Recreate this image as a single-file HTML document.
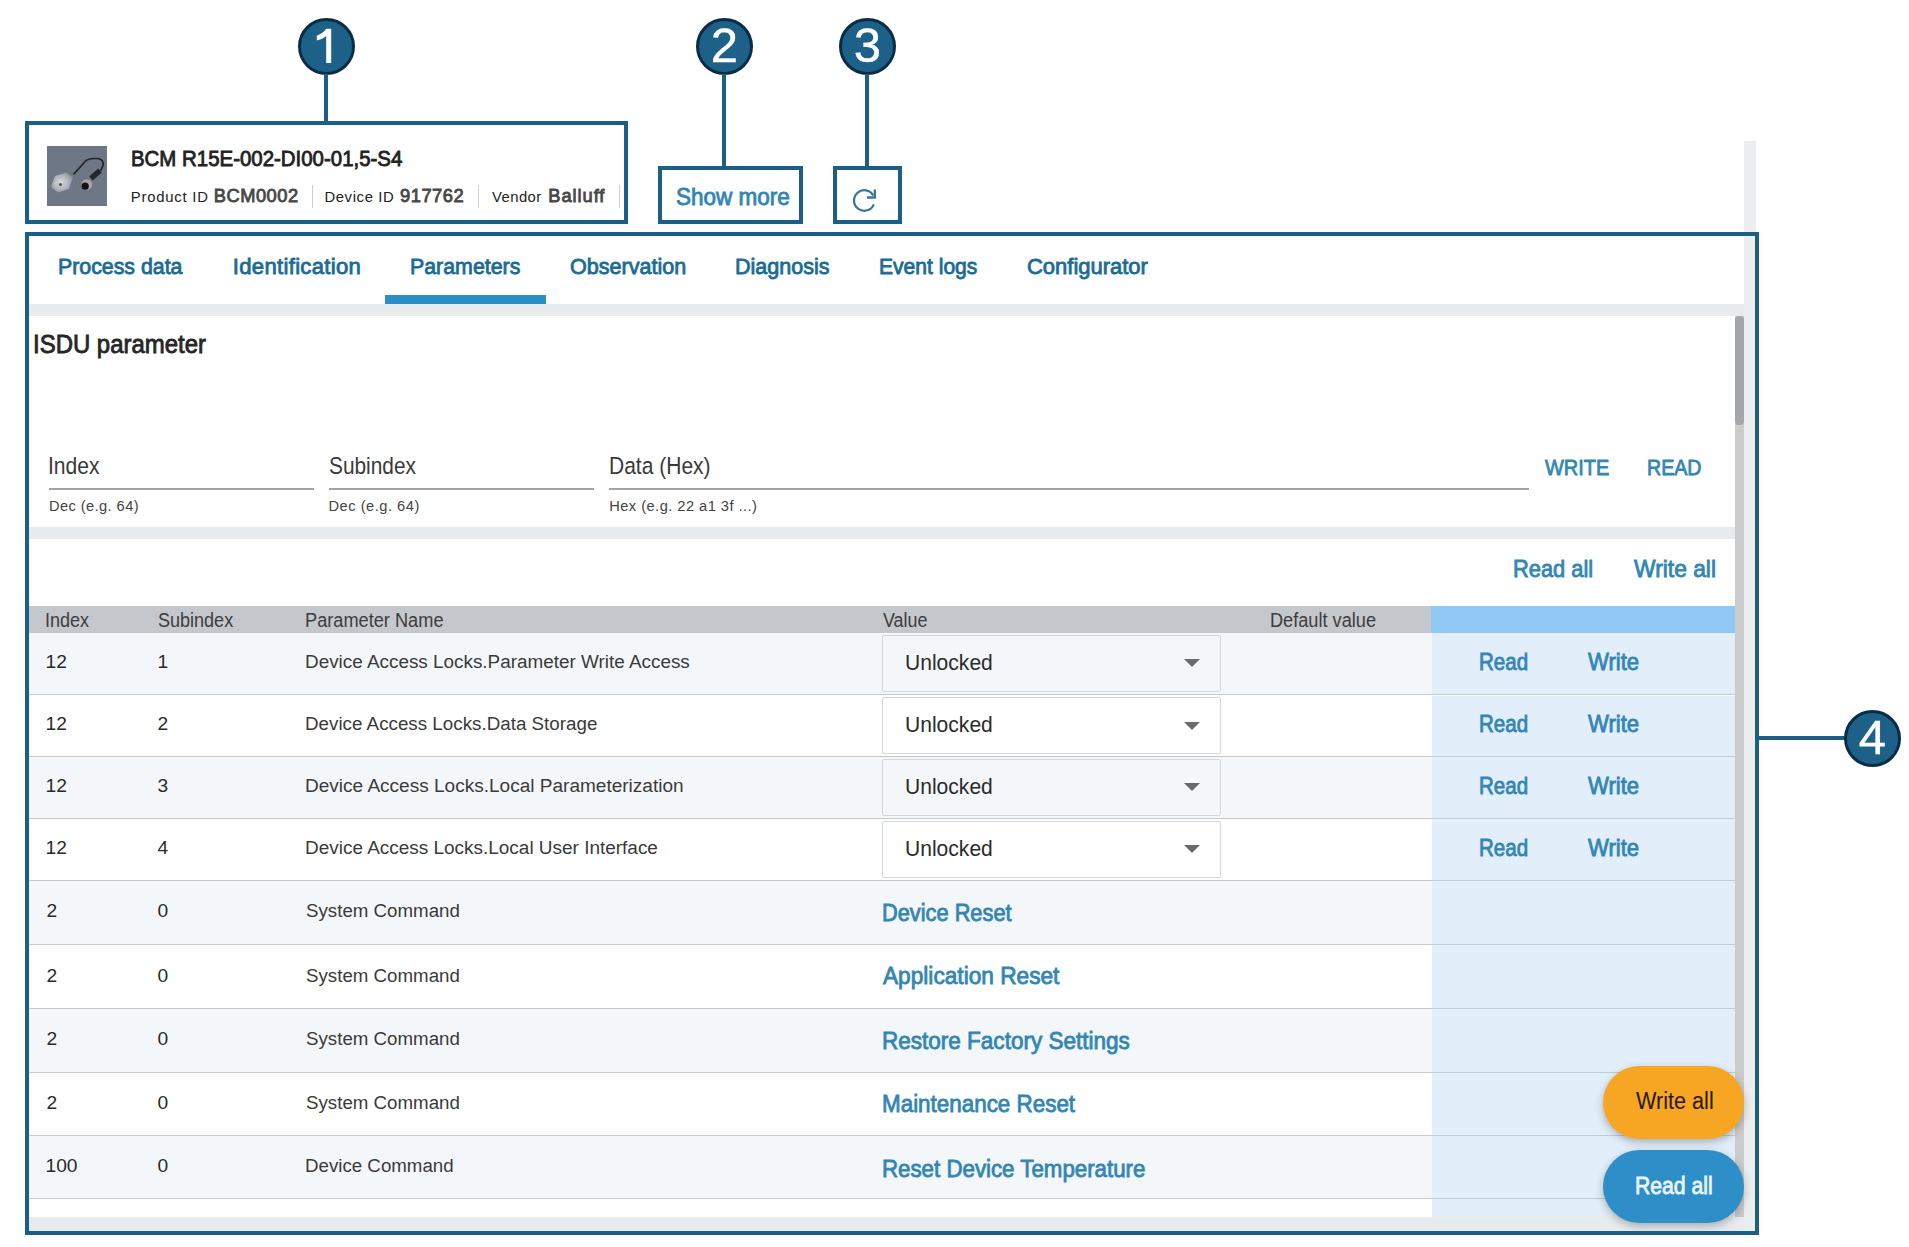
<!DOCTYPE html>
<html><head><meta charset="utf-8">
<style>
*{margin:0;padding:0;box-sizing:border-box}
html,body{width:1909px;height:1247px;overflow:hidden;background:#fff;font-family:"Liberation Sans",sans-serif}
.a{position:absolute}
.t{position:absolute;line-height:1;white-space:nowrap}
.cb{position:absolute;border:4px solid #1b5e86}
.ln{position:absolute;background:#1b5e86}
.circ{position:absolute;width:57px;height:57px;border-radius:50%;background:#1d6189;border:3.5px solid #0a2d46}
.circ span{position:absolute;left:0;right:0;text-align:center;color:#fff;font-size:49px;line-height:1;-webkit-text-stroke:0.4px #fff}
.sel{position:absolute;left:882px;width:339px;height:57px;border:1px solid #d4d7db;border-radius:2px}
.arr{position:absolute;left:1184px;width:0;height:0;border-left:8px solid transparent;border-right:8px solid transparent;border-top:8px solid #6a6a6a}
.sep{position:absolute;left:29px;width:1403px;height:1px;background:#c7cacd}
.sepb{position:absolute;left:1432px;width:303px;height:1px;background:#bfcdd8}
</style></head><body>

<div class="a" style="left:1744px;top:141px;width:12px;height:95px;background:#ebedef"></div>
<div class="a" style="left:29px;top:236px;width:1715px;height:68px;background:#fff"></div>
<div class="a" style="left:1744px;top:236px;width:11px;height:995px;background:#ebedef"></div>
<div class="a" style="left:29px;top:304px;width:1715px;height:12px;background:#e8ebee"></div>
<div class="a" style="left:29px;top:527px;width:1706px;height:12px;background:#e8ebee"></div>
<div class="a" style="left:29px;top:1217px;width:1715px;height:14px;background:#e8ebee"></div>
<div class="a" style="left:385px;top:295px;width:161px;height:9px;background:#2b8fc6"></div>
<div class="a" style="left:49px;top:488px;width:265px;height:2px;background:#a3a3a3"></div>
<div class="a" style="left:329px;top:488px;width:265px;height:2px;background:#a3a3a3"></div>
<div class="a" style="left:609px;top:488px;width:920px;height:2px;background:#a3a3a3"></div>
<div class="a" style="left:29px;top:606px;width:1402px;height:27px;background:#c4c7cc"></div>
<div class="a" style="left:1431px;top:606px;width:304px;height:27px;background:#90c8f4"></div>
<div class="a" style="left:29px;top:633px;width:1403px;height:61.5px;background:#f4f7fa"></div>
<div class="a" style="left:1432px;top:633px;width:303px;height:61.5px;background:#e2effa"></div>
<div class="sep" style="top:694px"></div><div class="sepb" style="top:694px"></div>
<div class="sel" style="top:634.5px;background:#f4f7fa"></div>
<div class="arr" style="top:659.0px"></div>
<div class="a" style="left:29px;top:695.5px;width:1403px;height:60.8px;background:#ffffff"></div>
<div class="a" style="left:1432px;top:695.5px;width:303px;height:60.8px;background:#e2effa"></div>
<div class="sep" style="top:756px"></div><div class="sepb" style="top:756px"></div>
<div class="sel" style="top:697.0px;background:#ffffff"></div>
<div class="arr" style="top:721.5px"></div>
<div class="a" style="left:29px;top:757.3px;width:1403px;height:61.0px;background:#f4f7fa"></div>
<div class="a" style="left:1432px;top:757.3px;width:303px;height:61.0px;background:#e2effa"></div>
<div class="sep" style="top:818px"></div><div class="sepb" style="top:818px"></div>
<div class="sel" style="top:758.8px;background:#f4f7fa"></div>
<div class="arr" style="top:783.3px"></div>
<div class="a" style="left:29px;top:819.3px;width:1403px;height:60.7px;background:#ffffff"></div>
<div class="a" style="left:1432px;top:819.3px;width:303px;height:60.7px;background:#e2effa"></div>
<div class="sep" style="top:880px"></div><div class="sepb" style="top:880px"></div>
<div class="sel" style="top:820.8px;background:#ffffff"></div>
<div class="arr" style="top:845.3px"></div>
<div class="a" style="left:29px;top:881px;width:1403px;height:63.4px;background:#f4f7fa"></div>
<div class="a" style="left:1432px;top:881px;width:303px;height:63.4px;background:#e2effa"></div>
<div class="sep" style="top:944px"></div><div class="sepb" style="top:944px"></div>
<div class="a" style="left:29px;top:945.4px;width:1403px;height:62.4px;background:#ffffff"></div>
<div class="a" style="left:1432px;top:945.4px;width:303px;height:62.4px;background:#e2effa"></div>
<div class="sep" style="top:1008px"></div><div class="sepb" style="top:1008px"></div>
<div class="a" style="left:29px;top:1008.8px;width:1403px;height:62.9px;background:#f4f7fa"></div>
<div class="a" style="left:1432px;top:1008.8px;width:303px;height:62.9px;background:#e2effa"></div>
<div class="sep" style="top:1072px"></div><div class="sepb" style="top:1072px"></div>
<div class="a" style="left:29px;top:1072.7px;width:1403px;height:62.1px;background:#ffffff"></div>
<div class="a" style="left:1432px;top:1072.7px;width:303px;height:62.1px;background:#e2effa"></div>
<div class="sep" style="top:1135px"></div><div class="sepb" style="top:1135px"></div>
<div class="a" style="left:29px;top:1135.8px;width:1403px;height:62.4px;background:#f4f7fa"></div>
<div class="a" style="left:1432px;top:1135.8px;width:303px;height:62.4px;background:#e2effa"></div>
<div class="sep" style="top:1198px"></div><div class="sepb" style="top:1198px"></div>
<div class="a" style="left:29px;top:1199.2px;width:1403px;height:17.799999999999955px;background:#fff"></div>
<div class="a" style="left:1432px;top:1199.2px;width:303px;height:17.799999999999955px;background:#e2effa"></div>
<div class="a" style="left:1735px;top:316px;width:9px;height:901px;background:#cbcbcb"></div>
<div class="a" style="left:1735px;top:316px;width:9px;height:109px;background:#a3a5a9;border-radius:4px"></div>
<svg class="a" style="left:47px;top:146px" width="60" height="60" viewBox="0 0 60 60">
<defs><radialGradient id="sv" cx="0.45" cy="0.5" r="0.6"><stop offset="0" stop-color="#d9dadb"/><stop offset="0.55" stop-color="#b4b7ba"/><stop offset="1" stop-color="#858b92"/></radialGradient></defs>
<rect width="60" height="60" fill="#6d7785"/>
<path d="M26.5 28.5 L38.5 15 Q40.5 13 47 12.5 L51 12.5 Q57 13.5 56 19.5 L53.5 25" fill="none" stroke="#1e2226" stroke-width="1.7"/>
<path d="M53 24.5 L44 32.5" stroke="#25282b" stroke-width="5.5"/>
<path d="M4 41 L8 30 L19 26.5 L26 31 L22 43 L11 46.5 Z" fill="url(#sv)"/>
<circle cx="13.5" cy="38.5" r="1.6" fill="#555"/>
<circle cx="39.8" cy="38.6" r="5.3" fill="#a3a7ab"/>
<circle cx="38.2" cy="40.2" r="3.6" fill="#121212"/>
</svg>
<div class="a" style="left:312px;top:185px;width:1px;height:23px;background:#cfcfcf"></div>
<div class="a" style="left:478px;top:185px;width:1px;height:23px;background:#cfcfcf"></div>
<div class="a" style="left:619px;top:185px;width:1px;height:23px;background:#cfcfcf"></div>
<div class="a" style="left:1603px;top:1066px;width:141px;height:73px;border-radius:37px;background:#f6a623;box-shadow:0 3px 8px rgba(0,0,0,.28)"></div>
<div class="a" style="left:1603px;top:1150px;width:141px;height:73px;border-radius:37px;background:#2e8ec7;box-shadow:0 3px 8px rgba(0,0,0,.28)"></div>
<div class="t" style="left:131.28px;top:147.94px;font-size:21.80px;font-weight:normal;-webkit-text-stroke:0.85px #222;transform:scaleX(0.9370);transform-origin:0 0;color:#222">BCM R15E-002-DI00-01,5-S4</div>
<div class="t" style="left:130.80px;top:190.05px;font-size:14.83px;font-weight:normal;letter-spacing:0.791px;color:#222">Product ID</div>
<div class="t" style="left:213.72px;top:187.10px;font-size:18.31px;font-weight:normal;-webkit-text-stroke:0.85px #484848;letter-spacing:0.512px;color:#484848">BCM0002</div>
<div class="t" style="left:324.40px;top:190.05px;font-size:14.83px;font-weight:normal;letter-spacing:0.637px;color:#222">Device ID</div>
<div class="t" style="left:400.12px;top:187.10px;font-size:18.31px;font-weight:normal;-webkit-text-stroke:0.85px #484848;letter-spacing:0.496px;color:#484848">917762</div>
<div class="t" style="left:491.90px;top:190.05px;font-size:14.83px;font-weight:normal;letter-spacing:0.477px;color:#222">Vendor</div>
<div class="t" style="left:548.32px;top:187.10px;font-size:18.31px;font-weight:normal;-webkit-text-stroke:0.85px #484848;letter-spacing:0.937px;color:#484848">Balluff</div>
<div class="t" style="left:676.05px;top:185.61px;font-size:23.26px;font-weight:normal;-webkit-text-stroke:0.85px #3386b4;transform:scaleX(0.9679);transform-origin:0 0;color:#3386b4">Show more</div>
<div class="t" style="left:58.45px;top:255.80px;font-size:22.09px;font-weight:normal;-webkit-text-stroke:0.85px #1b6c96;transform:scaleX(0.9656);transform-origin:0 0;color:#1b6c96">Process data</div>
<div class="t" style="left:232.82px;top:255.80px;font-size:22.09px;font-weight:normal;-webkit-text-stroke:0.85px #1b6c96;letter-spacing:0.314px;color:#1b6c96">Identification</div>
<div class="t" style="left:409.75px;top:255.80px;font-size:22.09px;font-weight:normal;-webkit-text-stroke:0.85px #1b6c96;transform:scaleX(0.9671);transform-origin:0 0;color:#1b6c96">Parameters</div>
<div class="t" style="left:569.84px;top:255.80px;font-size:22.09px;font-weight:normal;-webkit-text-stroke:0.85px #1b6c96;transform:scaleX(0.9760);transform-origin:0 0;color:#1b6c96">Observation</div>
<div class="t" style="left:734.84px;top:255.80px;font-size:22.09px;font-weight:normal;-webkit-text-stroke:0.85px #1b6c96;transform:scaleX(0.9754);transform-origin:0 0;color:#1b6c96">Diagnosis</div>
<div class="t" style="left:879.37px;top:255.80px;font-size:22.09px;font-weight:normal;-webkit-text-stroke:0.85px #1b6c96;transform:scaleX(0.9539);transform-origin:0 0;color:#1b6c96">Event logs</div>
<div class="t" style="left:1026.92px;top:255.80px;font-size:22.09px;font-weight:normal;-webkit-text-stroke:0.85px #1b6c96;transform:scaleX(0.9951);transform-origin:0 0;color:#1b6c96">Configurator</div>
<div class="t" style="left:33.09px;top:330.95px;font-size:26.16px;font-weight:normal;-webkit-text-stroke:0.85px #262626;transform:scaleX(0.9156);transform-origin:0 0;color:#262626">ISDU parameter</div>
<div class="t" style="left:48.22px;top:454.94px;font-size:23.69px;font-weight:normal;transform:scaleX(0.8894);transform-origin:0 0;color:#3a3a3a">Index</div>
<div class="t" style="left:328.62px;top:454.94px;font-size:23.69px;font-weight:normal;transform:scaleX(0.8802);transform-origin:0 0;color:#3a3a3a">Subindex</div>
<div class="t" style="left:609.31px;top:454.94px;font-size:23.69px;font-weight:normal;transform:scaleX(0.8870);transform-origin:0 0;color:#3a3a3a">Data (Hex)</div>
<div class="t" style="left:48.90px;top:499.27px;font-size:14.68px;font-weight:normal;letter-spacing:0.407px;color:#444">Dec (e.g. 64)</div>
<div class="t" style="left:328.50px;top:499.27px;font-size:14.68px;font-weight:normal;letter-spacing:0.498px;color:#444">Dec (e.g. 64)</div>
<div class="t" style="left:609.20px;top:499.27px;font-size:14.68px;font-weight:normal;letter-spacing:0.453px;color:#444">Hex (e.g. 22 a1 3f ...)</div>
<div class="t" style="left:1545.02px;top:456.21px;font-size:22.67px;font-weight:normal;-webkit-text-stroke:0.85px #3386b4;transform:scaleX(0.8802);transform-origin:0 0;color:#3386b4">WRITE</div>
<div class="t" style="left:1646.55px;top:456.21px;font-size:22.67px;font-weight:normal;-webkit-text-stroke:0.85px #3386b4;transform:scaleX(0.8663);transform-origin:0 0;color:#3386b4">READ</div>
<div class="t" style="left:1512.78px;top:558.11px;font-size:23.26px;font-weight:normal;-webkit-text-stroke:0.85px #3386b4;transform:scaleX(0.9400);transform-origin:0 0;color:#3386b4">Read all</div>
<div class="t" style="left:1633.72px;top:558.11px;font-size:23.26px;font-weight:normal;-webkit-text-stroke:0.85px #3386b4;transform:scaleX(0.9815);transform-origin:0 0;color:#3386b4">Write all</div>
<div class="t" style="left:45.49px;top:610.67px;font-size:19.77px;font-weight:normal;transform:scaleX(0.9127);transform-origin:0 0;color:#3d3d3d">Index</div>
<div class="t" style="left:157.50px;top:610.67px;font-size:19.77px;font-weight:normal;transform:scaleX(0.9117);transform-origin:0 0;color:#3d3d3d">Subindex</div>
<div class="t" style="left:305.08px;top:610.67px;font-size:19.77px;font-weight:normal;transform:scaleX(0.9204);transform-origin:0 0;color:#3d3d3d">Parameter Name</div>
<div class="t" style="left:882.60px;top:610.67px;font-size:19.77px;font-weight:normal;transform:scaleX(0.9050);transform-origin:0 0;color:#3d3d3d">Value</div>
<div class="t" style="left:1270.08px;top:610.67px;font-size:19.77px;font-weight:normal;transform:scaleX(0.9187);transform-origin:0 0;color:#3d3d3d">Default value</div>
<div class="t" style="left:45.50px;top:652.26px;font-size:19.19px;font-weight:normal;letter-spacing:0.000px;color:#2a2a2a">12</div>
<div class="t" style="left:157.60px;top:652.26px;font-size:19.19px;font-weight:normal;letter-spacing:0.000px;color:#2a2a2a">1</div>
<div class="t" style="left:305.02px;top:652.26px;font-size:19.19px;font-weight:normal;transform:scaleX(0.9841);transform-origin:0 0;color:#3a3a3a">Device Access Locks.Parameter Write Access</div>
<div class="t" style="left:904.78px;top:651.18px;font-size:22.82px;font-weight:normal;transform:scaleX(0.9233);transform-origin:0 0;color:#2b2b2b">Unlocked</div>
<div class="t" style="left:1479.04px;top:651.31px;font-size:23.26px;font-weight:normal;-webkit-text-stroke:0.85px #3386b4;transform:scaleX(0.8825);transform-origin:0 0;color:#3386b4">Read</div>
<div class="t" style="left:1587.92px;top:651.31px;font-size:23.26px;font-weight:normal;-webkit-text-stroke:0.85px #3386b4;transform:scaleX(0.9501);transform-origin:0 0;color:#3386b4">Write</div>
<div class="t" style="left:45.50px;top:714.16px;font-size:19.19px;font-weight:normal;letter-spacing:0.000px;color:#2a2a2a">12</div>
<div class="t" style="left:157.40px;top:714.16px;font-size:19.19px;font-weight:normal;letter-spacing:0.000px;color:#2a2a2a">2</div>
<div class="t" style="left:305.02px;top:714.16px;font-size:19.19px;font-weight:normal;transform:scaleX(0.9790);transform-origin:0 0;color:#3a3a3a">Device Access Locks.Data Storage</div>
<div class="t" style="left:904.78px;top:713.08px;font-size:22.82px;font-weight:normal;transform:scaleX(0.9233);transform-origin:0 0;color:#2b2b2b">Unlocked</div>
<div class="t" style="left:1479.04px;top:713.21px;font-size:23.26px;font-weight:normal;-webkit-text-stroke:0.85px #3386b4;transform:scaleX(0.8825);transform-origin:0 0;color:#3386b4">Read</div>
<div class="t" style="left:1587.92px;top:713.21px;font-size:23.26px;font-weight:normal;-webkit-text-stroke:0.85px #3386b4;transform:scaleX(0.9501);transform-origin:0 0;color:#3386b4">Write</div>
<div class="t" style="left:45.50px;top:775.76px;font-size:19.19px;font-weight:normal;letter-spacing:0.000px;color:#2a2a2a">12</div>
<div class="t" style="left:157.40px;top:775.76px;font-size:19.19px;font-weight:normal;letter-spacing:0.000px;color:#2a2a2a">3</div>
<div class="t" style="left:305.01px;top:775.76px;font-size:19.19px;font-weight:normal;transform:scaleX(0.9917);transform-origin:0 0;color:#3a3a3a">Device Access Locks.Local Parameterization</div>
<div class="t" style="left:904.78px;top:774.68px;font-size:22.82px;font-weight:normal;transform:scaleX(0.9233);transform-origin:0 0;color:#2b2b2b">Unlocked</div>
<div class="t" style="left:1479.04px;top:774.81px;font-size:23.26px;font-weight:normal;-webkit-text-stroke:0.85px #3386b4;transform:scaleX(0.8825);transform-origin:0 0;color:#3386b4">Read</div>
<div class="t" style="left:1587.92px;top:774.81px;font-size:23.26px;font-weight:normal;-webkit-text-stroke:0.85px #3386b4;transform:scaleX(0.9501);transform-origin:0 0;color:#3386b4">Write</div>
<div class="t" style="left:45.50px;top:837.76px;font-size:19.19px;font-weight:normal;letter-spacing:0.000px;color:#2a2a2a">12</div>
<div class="t" style="left:157.40px;top:837.76px;font-size:19.19px;font-weight:normal;letter-spacing:0.000px;color:#2a2a2a">4</div>
<div class="t" style="left:305.01px;top:837.76px;font-size:19.19px;font-weight:normal;transform:scaleX(0.9878);transform-origin:0 0;color:#3a3a3a">Device Access Locks.Local User Interface</div>
<div class="t" style="left:904.78px;top:836.68px;font-size:22.82px;font-weight:normal;transform:scaleX(0.9233);transform-origin:0 0;color:#2b2b2b">Unlocked</div>
<div class="t" style="left:1479.04px;top:836.81px;font-size:23.26px;font-weight:normal;-webkit-text-stroke:0.85px #3386b4;transform:scaleX(0.8825);transform-origin:0 0;color:#3386b4">Read</div>
<div class="t" style="left:1587.92px;top:836.81px;font-size:23.26px;font-weight:normal;-webkit-text-stroke:0.85px #3386b4;transform:scaleX(0.9501);transform-origin:0 0;color:#3386b4">Write</div>
<div class="t" style="left:46.50px;top:900.76px;font-size:19.19px;font-weight:normal;letter-spacing:0.000px;color:#2a2a2a">2</div>
<div class="t" style="left:157.40px;top:900.76px;font-size:19.19px;font-weight:normal;letter-spacing:0.000px;color:#2a2a2a">0</div>
<div class="t" style="left:306.00px;top:900.76px;font-size:19.19px;font-weight:normal;transform:scaleX(0.9750);transform-origin:0 0;color:#3a3a3a">System Command</div>
<div class="t" style="left:882.11px;top:901.20px;font-size:23.98px;font-weight:normal;-webkit-text-stroke:0.85px #3386b4;transform:scaleX(0.9089);transform-origin:0 0;color:#3386b4">Device Reset</div>
<div class="t" style="left:46.50px;top:965.56px;font-size:19.19px;font-weight:normal;letter-spacing:0.000px;color:#2a2a2a">2</div>
<div class="t" style="left:157.40px;top:965.56px;font-size:19.19px;font-weight:normal;letter-spacing:0.000px;color:#2a2a2a">0</div>
<div class="t" style="left:306.00px;top:965.56px;font-size:19.19px;font-weight:normal;transform:scaleX(0.9750);transform-origin:0 0;color:#3a3a3a">System Command</div>
<div class="t" style="left:883.02px;top:964.40px;font-size:23.98px;font-weight:normal;-webkit-text-stroke:0.85px #3386b4;transform:scaleX(0.9458);transform-origin:0 0;color:#3386b4">Application Reset</div>
<div class="t" style="left:46.50px;top:1029.06px;font-size:19.19px;font-weight:normal;letter-spacing:0.000px;color:#2a2a2a">2</div>
<div class="t" style="left:157.40px;top:1029.06px;font-size:19.19px;font-weight:normal;letter-spacing:0.000px;color:#2a2a2a">0</div>
<div class="t" style="left:306.00px;top:1029.06px;font-size:19.19px;font-weight:normal;transform:scaleX(0.9750);transform-origin:0 0;color:#3a3a3a">System Command</div>
<div class="t" style="left:882.08px;top:1029.40px;font-size:23.98px;font-weight:normal;-webkit-text-stroke:0.85px #3386b4;transform:scaleX(0.9394);transform-origin:0 0;color:#3386b4">Restore Factory Settings</div>
<div class="t" style="left:46.50px;top:1092.76px;font-size:19.19px;font-weight:normal;letter-spacing:0.000px;color:#2a2a2a">2</div>
<div class="t" style="left:157.40px;top:1092.76px;font-size:19.19px;font-weight:normal;letter-spacing:0.000px;color:#2a2a2a">0</div>
<div class="t" style="left:306.00px;top:1092.76px;font-size:19.19px;font-weight:normal;transform:scaleX(0.9750);transform-origin:0 0;color:#3a3a3a">System Command</div>
<div class="t" style="left:882.09px;top:1092.30px;font-size:23.98px;font-weight:normal;-webkit-text-stroke:0.85px #3386b4;transform:scaleX(0.9349);transform-origin:0 0;color:#3386b4">Maintenance Reset</div>
<div class="t" style="left:45.50px;top:1156.26px;font-size:19.19px;font-weight:normal;letter-spacing:0.000px;color:#2a2a2a">100</div>
<div class="t" style="left:157.40px;top:1156.26px;font-size:19.19px;font-weight:normal;letter-spacing:0.000px;color:#2a2a2a">0</div>
<div class="t" style="left:305.03px;top:1156.26px;font-size:19.19px;font-weight:normal;transform:scaleX(0.9748);transform-origin:0 0;color:#3a3a3a">Device Command</div>
<div class="t" style="left:882.09px;top:1156.70px;font-size:23.98px;font-weight:normal;-webkit-text-stroke:0.85px #3386b4;transform:scaleX(0.9296);transform-origin:0 0;color:#3386b4">Reset Device Temperature</div>
<div class="t" style="left:1635.50px;top:1088.70px;font-size:23.98px;font-weight:normal;transform:scaleX(0.9021);transform-origin:0 0;color:#2a1605">Write all</div>
<div class="t" style="left:1635.04px;top:1174.10px;font-size:23.98px;font-weight:normal;-webkit-text-stroke:0.85px #eaf5fb;transform:scaleX(0.8836);transform-origin:0 0;color:#eaf5fb">Read all</div>
<svg class="a" style="left:850px;top:186px" width="28" height="28" viewBox="0 0 28 28"><path d="M23.8 18.3 A10.25 10.25 0 1 1 23.3 9.6" fill="none" stroke="#3a7697" stroke-width="2.2"/><path d="M24.9 3.6 L24.9 11.5 L16.9 11.5" fill="none" stroke="#3a7697" stroke-width="2.4"/></svg>
<div class="circ" style="left:298px;top:18px"></div>
<svg class="a" style="left:298px;top:18px" width="57" height="57" viewBox="298 18 57 57"><path d="M326.2 28.8 L331.2 28.8 L331.2 63.1 L326.2 63.1 L326.2 36.3 Q322.5 39.2 316.8 40.6 L316.8 35.8 Q323.2 33.2 326.2 28.8 Z" fill="#fff"/></svg>
<div class="ln" style="left:324px;top:74px;width:4px;height:48px"></div>
<div class="cb" style="left:25px;top:121px;width:603px;height:103px"></div>
<div class="circ" style="left:696px;top:18px"><span style="top:0px">2</span></div>
<div class="ln" style="left:722px;top:74px;width:4px;height:94px"></div>
<div class="cb" style="left:658px;top:166px;width:145px;height:58px"></div>
<div class="circ" style="left:839px;top:18px"><span style="top:0px">3</span></div>
<div class="ln" style="left:865px;top:74px;width:4px;height:94px"></div>
<div class="cb" style="left:833px;top:166px;width:69px;height:58px"></div>
<div class="cb" style="left:25px;top:232px;width:1734px;height:1003px"></div>
<div class="ln" style="left:1759px;top:736px;width:90px;height:4px"></div>
<div class="circ" style="left:1844px;top:710px"><span style="top:0px">4</span></div>
</body></html>
